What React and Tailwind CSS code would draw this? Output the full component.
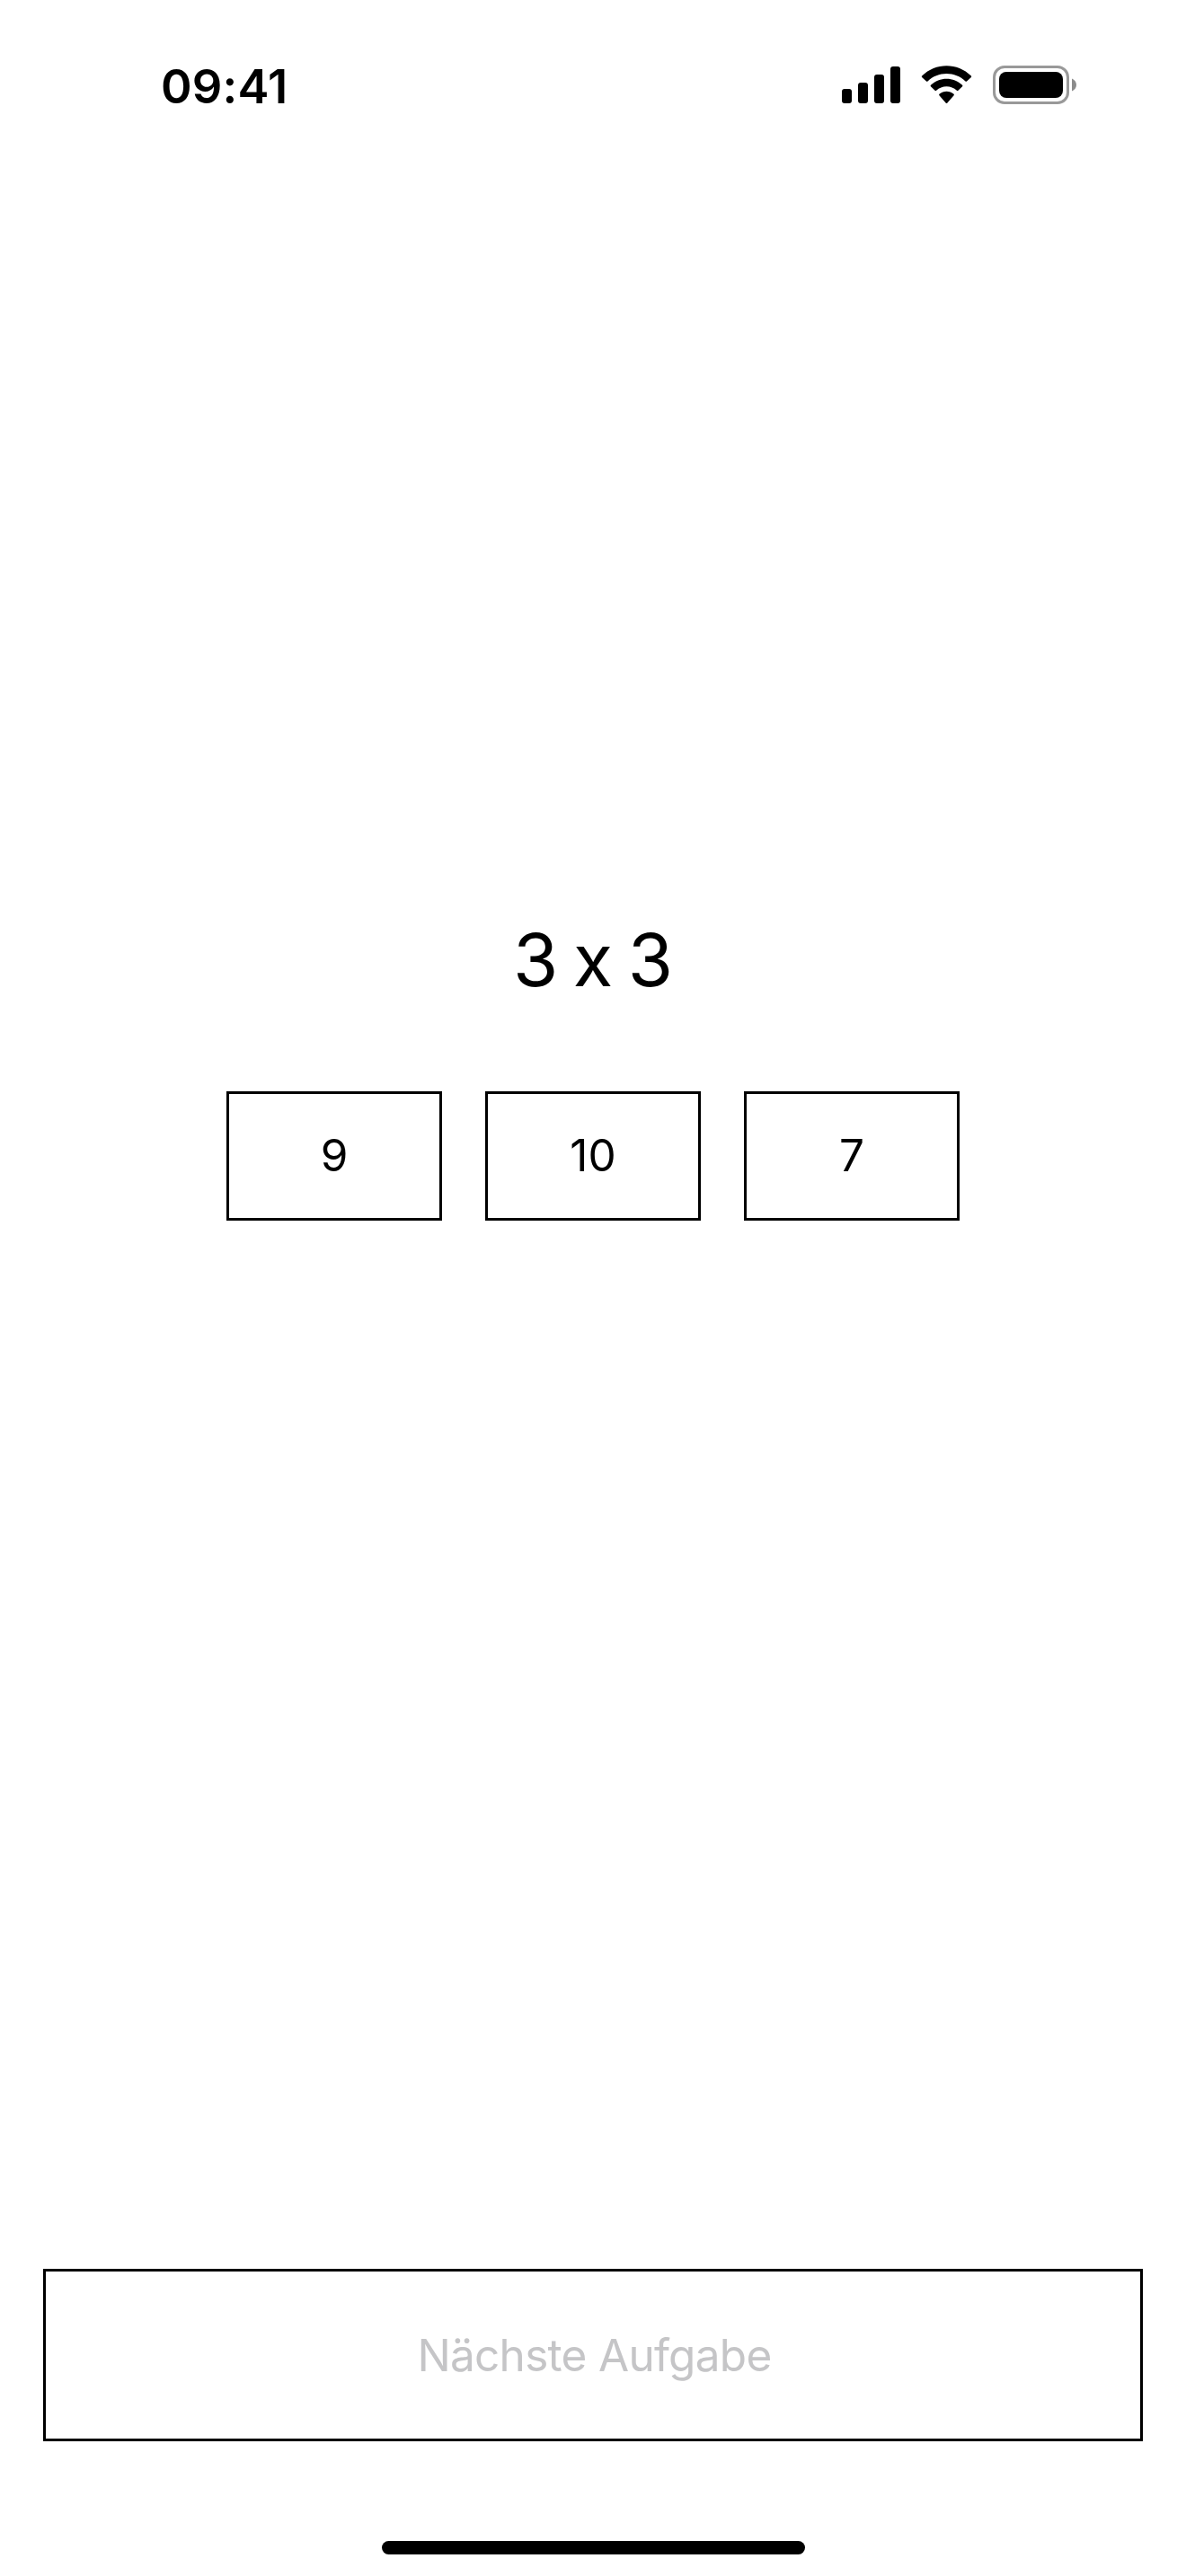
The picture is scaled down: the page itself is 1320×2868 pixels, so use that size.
function SignalIcon() {
  return (
    <svg className="block h-[43px] w-[65px]" viewBox="0 0 65 43" aria-hidden="true">
      <rect x="0" y="26" width="11" height="16" rx="3" />
      <rect x="18" y="19" width="11" height="23" rx="3" />
      <rect x="36" y="10" width="11" height="32" rx="3" />
      <rect x="54" y="1" width="11" height="41" rx="3" />
    </svg>
  );
}

function WifiIcon() {
  return (
    <svg className="block h-[43px] w-[57px]" viewBox="0 0 57 43" aria-hidden="true">
      <path d="M28.5 9C36.3 9 43.8 12 49.5 17.4C49.9 17.8 50.6 17.8 51 17.4L55.9 12.9C56.3 12.5 56.3 11.9 55.9 11.5C40.6 -3.6 16.4 -3.6 1.1 11.5C0.7 11.9 0.7 12.5 1.1 12.9L6 17.4C6.4 17.8 7.1 17.8 7.5 17.4C13.2 12 20.7 9 28.5 9Z" />
      <path d="M28.5 23.2C32.7 23.2 36.8 24.8 39.9 27.7C40.3 28.1 41 28.1 41.4 27.7L46.1 23.3C46.5 22.9 46.5 22.2 46.1 21.8C36.2 12.4 20.8 12.4 10.9 21.8C10.5 22.2 10.5 22.9 10.9 23.3L15.6 27.7C16 28.1 16.7 28.1 17.1 27.7C20.2 24.8 24.3 23.2 28.5 23.2Z" />
      <path d="M36.6 33.3C37 32.9 37 32.2 36.6 31.8C31.9 27.8 25.1 27.8 20.4 31.8C20 32.2 20 32.9 20.4 33.3L27.8 41.7C28.2 42.1 28.8 42.1 29.2 41.7Z" />
    </svg>
  );
}

function BatteryIcon() {
  return (
    <svg className="block h-[43px] w-[93px]" viewBox="0 0 93 43" aria-hidden="true">
      <rect x="1.5" y="1.5" width="82" height="40" rx="11.5" fill="none" stroke="#999999" strokeWidth="3" />
      <rect x="7" y="7" width="71" height="29" rx="8" />
      <path d="M88 14.5V28.5C91 27.3 93 24.7 93 21.5C93 18.3 91 15.7 88 14.5Z" fill="#8c8c8c" />
    </svg>
  );
}

function StatusBar() {
  return (
    <header className="flex h-[189px] items-start justify-between pt-[73px] pr-[122px] pl-[179px]">
      <span className="text-[52.5px] leading-[46px] font-semibold tracking-[0.2px]">09:41</span>
      <div className="flex gap-[23px]">
        <SignalIcon />
        <WifiIcon />
        <BatteryIcon />
      </div>
    </header>
  );
}

const answers = ["9", "10", "7"];

export default function App() {
  return (
    <div className="flex h-[2868px] w-[1320px] flex-col bg-white font-['Inter',sans-serif] text-black">
      <StatusBar />
      <main className="flex flex-1 flex-col items-center pt-[829px]">
        <h1 className="text-[81.5px] leading-[101px] font-normal [font-feature-settings:'calt'_0] [word-spacing:-6.5px]">
          3 x 3
        </h1>
        <div className="mt-24 flex gap-12">
          {answers.map((answer) => (
            <button
              key={answer}
              className="flex h-36 w-60 items-center justify-center border-3 border-black text-[49.5px] leading-none"
            >
              {answer}
            </button>
          ))}
        </div>
      </main>
      <footer className="flex flex-col items-center px-12 pb-6">
        <button
          disabled
          className="flex h-48 w-full items-center justify-center border-3 border-black pt-0.5 pl-[3px] text-[49.5px] leading-none tracking-[-0.71px] text-[#c5c5c7]"
        >
          Nächste Aufgabe
        </button>
        <div className="mt-[111px] h-[15px] w-[471px] rounded-full bg-black" />
      </footer>
    </div>
  );
}
